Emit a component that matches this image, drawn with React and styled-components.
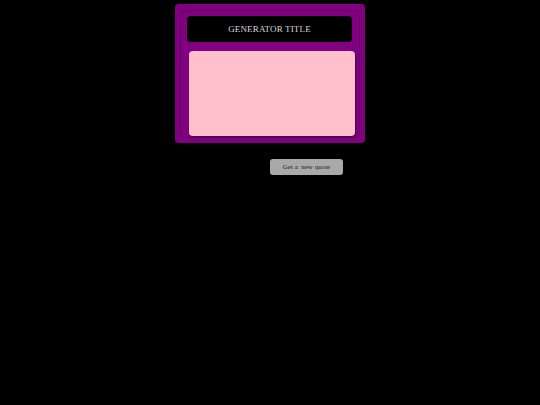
import React from 'react';
import styled, { createGlobalStyle } from 'styled-components';

const GlobalStyle = createGlobalStyle`
  html, body {
    margin: 0;
    background: #000;
    font-family: "Liberation Serif", "Times New Roman", serif;
  }
`;

const Page = styled.div`
  width: 540px;
  height: 405px;
  background: #000;
  display: flex;
  flex-direction: column;
  align-items: center;
  padding-top: 4px;
  box-sizing: border-box;
`;

const Card = styled.div`
  width: 190px;
  height: 139px;
  box-sizing: border-box;
  background: #800080;
  border-radius: 4px;
  padding: 6px 5px 5px 5px;
`;

const Frame = styled.div`
  height: 100%;
  box-sizing: border-box;
  border: 1px solid #5e005e;
  border-radius: 5px;
  padding: 5px 4px 1px 6px;
  display: flex;
  flex-direction: column;
  gap: 9px;
`;

const TitleBar = styled.div`
  width: 165px;
  height: 26px;
  background: #000;
  border-radius: 4px;
  display: flex;
  align-items: center;
  justify-content: center;
  color: #d8d8d8;
  font-size: 9px;
  font-weight: 400;
  letter-spacing: 0.15px;
`;

const QuoteBox = styled.div`
  flex: 1;
  margin-left: 2px;
  background: #ffc0cb;
  border-radius: 4px;
  box-shadow: 1px 1px 2px #4a004a;
`;

const Button = styled.button`
  margin: 16px 0 0 73px;
  width: 73px;
  height: 16px;
  padding: 0;
  border: none;
  border-radius: 3px;
  background: #a9a9a9;
  color: #222;
  font-family: "Liberation Serif", "Times New Roman", serif;
  font-size: 7px;
  white-space: pre;
`;

export default function App() {
  return (
    <>
      <GlobalStyle />
      <Page>
        <Card>
          <Frame>
            <TitleBar>GENERATOR TITLE</TitleBar>
            <QuoteBox />
          </Frame>
        </Card>
        <Button>{'Get a  new quote'}</Button>
      </Page>
    </>
  );
}
